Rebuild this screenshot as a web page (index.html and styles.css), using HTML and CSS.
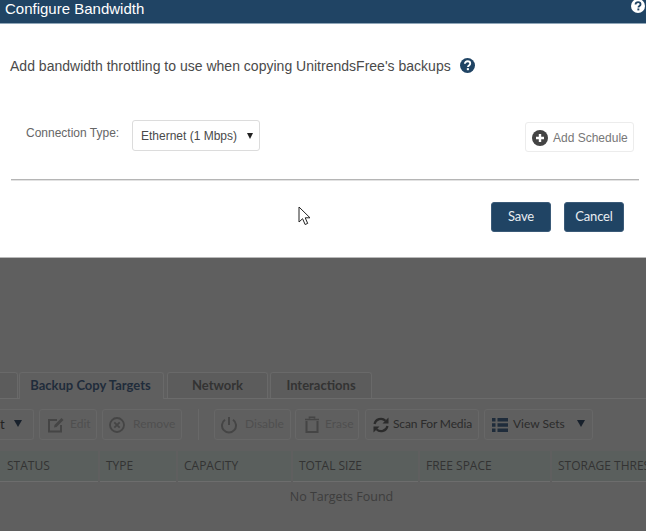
FILE: index.html
```html
<!DOCTYPE html>
<html lang="en">
<head>
<meta charset="utf-8">
<title>Configure Bandwidth</title>
<link rel="stylesheet" href="styles.css">
</head>
<body>
<section class="modal">
  <header class="modal-head">
    <h1>Configure Bandwidth</h1>
    <svg class="head-help" viewBox="0 0 16 16"><circle cx="8" cy="8" r="8" fill="#fff"/><path d="M5.2 6.2c0-1.7 1.3-2.7 2.9-2.7s2.8 1 2.8 2.4c0 2.2-2.4 2-2.4 3.8" fill="none" stroke="#204464" stroke-width="2.1"/><rect x="7.3" y="10.8" width="2.2" height="2.2" fill="#204464"/></svg>
  </header>
  <div class="modal-body">
    <p class="intro">Add bandwidth throttling to use when copying UnitrendsFree's backups
      <svg class="intro-help" viewBox="0 0 16 16"><circle cx="8" cy="8" r="8" fill="#204464"/><path d="M5.2 6.2c0-1.7 1.3-2.7 2.9-2.7s2.8 1 2.8 2.4c0 2.2-2.4 2-2.4 3.8" fill="none" stroke="#fff" stroke-width="2"/><rect x="7.3" y="10.8" width="2.2" height="2.2" fill="#fff"/></svg>
    </p>
    <div class="conn-row">
      <span class="conn-label">Connection Type:</span>
      <div class="select"><span>Ethernet (1 Mbps)</span><span class="select-arrow"></span></div>
      <div class="add-schedule">
        <svg class="plus" viewBox="0 0 16 16"><circle cx="8" cy="8" r="8" fill="#444"/><path d="M8 4v8M4 8h8" stroke="#fff" stroke-width="2.4"/></svg>
        <span class="add-label">Add Schedule</span>
      </div>
    </div>
    <hr class="rule">
    <div class="actions">
      <button class="primary">Save</button>
      <button class="primary">Cancel</button>
    </div>
  </div>
  <svg class="cursor" viewBox="0 0 13 20"><path d="M1 1v15l3.6-3.3 2.5 5.8 2.6-1.1-2.5-5.6h4.8z" fill="#fff" stroke="#222" stroke-width="1"/></svg>
</section>

<main class="backdrop">
  <nav class="tabs">
    <div class="tab tab-stub"></div>
    <div class="tab tab-active">Backup Copy Targets</div>
    <div class="tab tab-network">Network</div>
    <div class="tab tab-inter">Interactions</div>
  </nav>
  <div class="toolbar">
    <div class="tool tool-stub"><span class="strong">t</span><span class="caret"></span></div>
    <div class="tool tool-edit muted">
      <svg viewBox="0 0 18 18"><path d="M14 9v6.5H2V4h8" fill="none" stroke="currentColor" stroke-width="2"/><path d="M7 11.5l.5-2.5L14.5 2l2 2-7 7z" fill="currentColor"/></svg>Edit</div>
    <div class="tool tool-remove muted">
      <svg viewBox="0 0 18 18"><circle cx="8" cy="9" r="7" fill="none" stroke="currentColor" stroke-width="1.8"/><path d="M5.3 6.3l5.4 5.4M10.7 6.3l-5.4 5.4" stroke="currentColor" stroke-width="1.8"/></svg>Remove</div>
    <div class="tool-sep"></div>
    <div class="tool tool-disable muted">
      <svg viewBox="0 0 18 18"><path d="M4 3.8a7 7 0 1 0 8 0" fill="none" stroke="currentColor" stroke-width="2"/><path d="M8 1v8" stroke="currentColor" stroke-width="2"/></svg>Disable</div>
    <div class="tool tool-erase muted">
      <svg viewBox="0 0 18 18"><path d="M3.5 5v11h11V5" fill="none" stroke="currentColor" stroke-width="2"/><path d="M2 3.5h14M6.5 2.5V1.2h5v1.3" fill="none" stroke="currentColor" stroke-width="1.6"/></svg>Erase</div>
    <div class="tool tool-scan">
      <svg viewBox="0 0 18 18"><path d="M2.5 8a6.5 6.5 0 0 1 11-3.2" fill="none" stroke="currentColor" stroke-width="2.2"/><path d="M16.5 1.5v6h-6z" fill="currentColor"/><path d="M15.5 10a6.5 6.5 0 0 1-11 3.2" fill="none" stroke="currentColor" stroke-width="2.2"/><path d="M1.5 16.5v-6h6z" fill="currentColor"/></svg>Scan For Media</div>
    <div class="tool tool-sets">
      <svg viewBox="0 0 18 18"><path d="M1 2h3.5v3.5H1zM6.5 2H17v3.5H6.5zM1 7.2h3.5v3.5H1zM6.5 7.2H17v3.5H6.5zM1 12.5h3.5V16H1zM6.5 12.5H17V16H6.5z" fill="currentColor"/></svg>View Sets<span class="caret caret-sets"></span></div>
  </div>
  <div class="thead">
    <div class="th th-status">STATUS</div>
    <div class="th th-type">TYPE</div>
    <div class="th th-cap">CAPACITY</div>
    <div class="th th-total">TOTAL SIZE</div>
    <div class="th th-free">FREE SPACE</div>
    <div class="th th-thresh">STORAGE THRESHOLD</div>
  </div>
  <p class="empty">No Targets Found</p>
</main>
</body>
</html>
```
FILE: styles.css
```css
* { box-sizing: border-box; }
html, body { margin: 0; height: 100%; }
body {
  width: 646px;
  height: 531px;
  overflow: hidden;
  background: #5f5f5f;
  font-family: "Liberation Sans", Arial, sans-serif;
}

.modal { position: relative; height: 258px; background: #fff; border-bottom: 1px solid #b9b9b9; }
.modal-head {
  height: 24px;
  background: #204464;
  border-bottom: 1px solid #8fa6b8;
  display: flex;
  justify-content: space-between;
  padding: 0 1px 0 5px;
  color: #fff;
}
.modal-head h1 { margin: 0; font-size: 15px; font-weight: 400; line-height: 17px; }
.head-help { width: 14px; height: 14px; margin-top: -1px; }

.modal-body { padding: 0 7px 0 10px; }
.intro { margin: 33px 0 0; height: 18px; display: flex; align-items: center; font-size: 14px; color: #4a4a4a; line-height: 18px; letter-spacing: 0.01px; }
.intro-help { width: 15px; height: 15px; margin: -2px 0 0 9px; }

.conn-row { display: flex; align-items: flex-start; margin-top: 45px; height: 59px; }
.conn-label { font-size: 12px; line-height: 14px; color: #666; margin: 6px 0 0 16px; width: 106px; }
.select {
  width: 128px;
  height: 31px;
  border: 1px solid #dcdcdc;
  border-radius: 3px;
  display: flex;
  justify-content: space-between;
  align-items: center;
  padding: 0 6px 0 8px;
  font-size: 12px;
  color: #4a4a4a;
}
.select-arrow { width: 0; height: 0; border-left: 3.5px solid transparent; border-right: 3.5px solid transparent; border-top: 6px solid #222; }
.add-schedule {
  margin: 2px 5px 0 auto;
  width: 109px;
  height: 30px;
  border: 1px solid #ececec;
  border-radius: 3px;
  display: flex;
  align-items: center;
  padding-left: 6px;
  gap: 5px;
  font-size: 12px;
  color: #777;
  white-space: nowrap;
}
.add-label { padding-top: 2px; }
.plus { width: 16px; height: 16px; flex: none; margin-top: 2px; }

.rule { margin: 0 0 0 1px; border: 0; height: 1px; background: #b5b5b5; box-shadow: 0 1px 0 #e2e2e2; }
.actions { display: flex; justify-content: flex-end; gap: 13px; margin-top: 22px; padding-right: 15px; }
.primary {
  width: 60px;
  height: 30px;
  border: 1px solid #3a5a78;
  border-radius: 3px;
  background: #204464;
  color: #e8edf1;
  font-family: Lato, sans-serif;
  font-size: 13px;
  letter-spacing: -0.15px;
  padding: 0 0 2px;
}
.cursor { position: absolute; left: 298px; top: 206px; width: 13px; height: 20px; }

.backdrop { padding-top: 114px; font-family: "Open Sans", sans-serif; }
.tabs { display: flex; height: 27px; border-bottom: 1px solid #6b6b6b; gap: 2px; }
.tab {
  height: 26px;
  border: 1px solid #696969;
  border-bottom: 0;
  border-radius: 3px 3px 0 0;
  background: #5c5c5c;
  display: flex;
  align-items: center;
  justify-content: center;
  padding-bottom: 2px;
  font-family: Lato, sans-serif;
  font-size: 13px;
  font-weight: 700;
  color: #333;
}
.tab-stub { width: 18px; border-left: 0; border-radius: 0 3px 0 0; margin-right: -1px; }
.tab-active { width: 145px; background: #5f5f5f; color: #1f2c3b; position: relative; height: 27px; padding-right: 2px; }
.tab-network { width: 101px; margin-left: 1px; }
.tab-inter { width: 102px; }

.toolbar { display: flex; align-items: stretch; height: 31px; margin-top: 10px; font-family: Lato, sans-serif; font-size: 12px; }
.tool {
  display: flex;
  align-items: center;
  border: 1px solid #676767;
  border-radius: 3px;
  padding-bottom: 2px;
  color: #333;
  white-space: nowrap;
}
.tool svg { width: 18px; height: 18px; flex: none; margin-top: 2px; }
.tool.muted { color: #4f4f4f; }
.tool.muted svg { color: #454545; }
.tool-stub { width: 34px; border-left: 0; border-radius: 0 3px 3px 0; gap: 9px; }
.strong { color: #222; font-size: 13px; margin-left: 0; }
.caret { width: 0; height: 0; border-left: 4.5px solid transparent; border-right: 4.5px solid transparent; border-top: 7px solid #18212c; }
.tool-edit { width: 58px; margin-left: 5px; padding-left: 7px; gap: 5px; }
.tool-remove { width: 80px; margin-left: 5px; padding-left: 6px; gap: 6px; }
.tool-sep { width: 1px; margin: 0 15px 0 16px; background: #686868; }
.tool-disable { width: 77px; padding-left: 6px; gap: 6px; }
.tool-erase { width: 64px; margin-left: 4px; padding-left: 7px; gap: 4px; }
.tool-scan { width: 114px; margin-left: 6px; padding-left: 6px; gap: 3px; color: #2b2b2b; letter-spacing: -0.15px; }
.tool-sets { width: 109px; margin-left: 5px; padding-left: 6px; gap: 4px; color: #2b2b2b; }
.tool-sets svg { color: #1f2c3b; }
.caret-sets { margin-left: 8px; }

.thead { display: flex; gap: 2px; height: 31px; margin-top: 11px; overflow: hidden; }
.th {
  flex: none;
  height: 31px;
  background: #5a5f5d;
  border-bottom: 1px solid #6d6d6d;
  display: flex;
  align-items: center;
  padding: 0 0 2px 6px;
  font-size: 12px;
  color: #333;
  white-space: nowrap;
}
.th-status { width: 98px; padding-left: 7px; }
.th-type { width: 76px; }
.th-cap { width: 113px; }
.th-total { width: 125px; }
.th-free { width: 130px; }
.th-thresh { width: 140px; }

.empty { margin: 6px 0 0; padding-left: 37px; text-align: center; font-size: 12.5px; line-height: 17px; color: #3d3d3d; }
```
